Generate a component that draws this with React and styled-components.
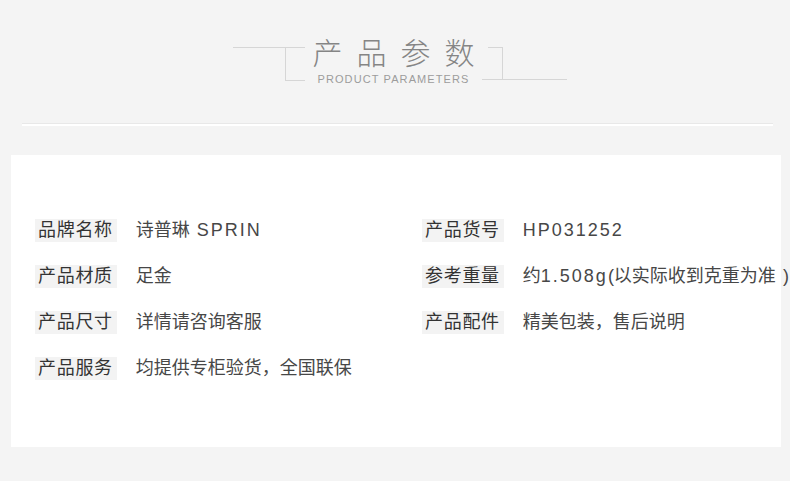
import React from "react";
import styled, { createGlobalStyle } from "styled-components";

const GlobalStyle = createGlobalStyle`
  html, body {
    margin: 0;
    padding: 0;
    background: #f4f4f4;
  }
  body {
    font-family: "Liberation Sans", "Noto Sans CJK SC", sans-serif;
    overflow: hidden;
  }
`;

const Page = styled.div`
  width: 790px;
  height: 481px;
  background: #f4f4f4;
`;

const Header = styled.div`
  display: flex;
  justify-content: center;
  align-items: flex-start;
  box-sizing: border-box;
  height: 124px;
  padding: 33px 0 0 10px;
`;

const LeftDeco = styled.div`
  position: relative;
  width: 72px;
  height: 32px;
  margin-top: 14px;
  border-top: 1px solid #d6d6d6;

  &::after {
    content: "";
    position: absolute;
    right: 0;
    top: 0;
    width: 19px;
    height: 32px;
    border-left: 1px solid #d6d6d6;
    border-bottom: 1px solid #d6d6d6;
  }
`;

const RightDeco = styled.div`
  position: relative;
  width: 85px;
  height: 32px;
  margin-top: 14px;
  border-bottom: 1px solid #d6d6d6;

  &::after {
    content: "";
    position: absolute;
    left: 6px;
    top: 0;
    width: 14px;
    height: 32px;
    border-top: 1px solid #d6d6d6;
    border-right: 1px solid #d6d6d6;
  }
`;

const TitleBox = styled.div`
  width: 177px;
  display: flex;
  flex-direction: column;
  align-items: center;
`;

const Title = styled.div`
  font-family: "Noto Sans CJK SC", sans-serif;
  font-weight: 300;
  font-size: 30px;
  line-height: 36px;
  letter-spacing: 14px;
  margin-right: -14px;
  color: #858585;
`;

const SubTitle = styled.div`
  font-family: "Liberation Sans", sans-serif;
  font-size: 11px;
  line-height: 14px;
  letter-spacing: 1.1px;
  margin-top: 3px;
  color: #9c9c9c;
`;

const Divider = styled.div`
  height: 2px;
  margin: 0 17px 0 22px;
  background: #ffffff;
  box-shadow: 0 -1px 0 #e8e8e8;
`;

const Card = styled.div`
  box-sizing: border-box;
  height: 292px;
  margin: 29px 9px 0 11px;
  padding: 64px 0 0 24px;
  background: #ffffff;
  display: grid;
  grid-template-columns: 387px 1fr;
  grid-auto-rows: 23px;
  row-gap: 23px;
  align-content: start;
`;

const Row = styled.div`
  display: flex;
  align-items: center;
  white-space: nowrap;
`;

const Label = styled.span`
  height: 23px;
  line-height: 23px;
  padding: 0 4px 0 3px;
  background: #f3f3f3;
  font-size: 18px;
  letter-spacing: 0.7px;
  color: #333333;
`;

const Value = styled.span`
  margin-left: 19px;
  font-size: 18px;
  line-height: 23px;
  color: #474747;
`;

const Latin = styled.span`
  letter-spacing: 2px;
`;

const params = [
  ["品牌名称", "诗普琳 SPRIN"],
  ["产品货号", "HP031252"],
  ["产品材质", "足金"],
  ["参考重量", "约1.508g(以实际收到克重为准 )"],
  ["产品尺寸", "详情请咨询客服"],
  ["产品配件", "精美包装，售后说明"],
  ["产品服务", "均提供专柜验货，全国联保"],
];

// latin runs render wider in the reference, so they get their own spacing
const renderValue = (text) =>
  text.split(/([A-Za-z0-9. ]+)/).map((part, i) =>
    /^[A-Za-z0-9. ]+$/.test(part) ? <Latin key={i}>{part}</Latin> : part
  );

export default function App() {
  return (
    <Page>
      <GlobalStyle />
      <Header>
        <LeftDeco />
        <TitleBox>
          <Title>产品参数</Title>
          <SubTitle>PRODUCT PARAMETERS</SubTitle>
        </TitleBox>
        <RightDeco />
      </Header>
      <Divider />
      <Card>
        {params.map(([label, value]) => (
          <Row key={label}>
            <Label>{label}</Label>
            <Value>{renderValue(value)}</Value>
          </Row>
        ))}
      </Card>
    </Page>
  );
}
